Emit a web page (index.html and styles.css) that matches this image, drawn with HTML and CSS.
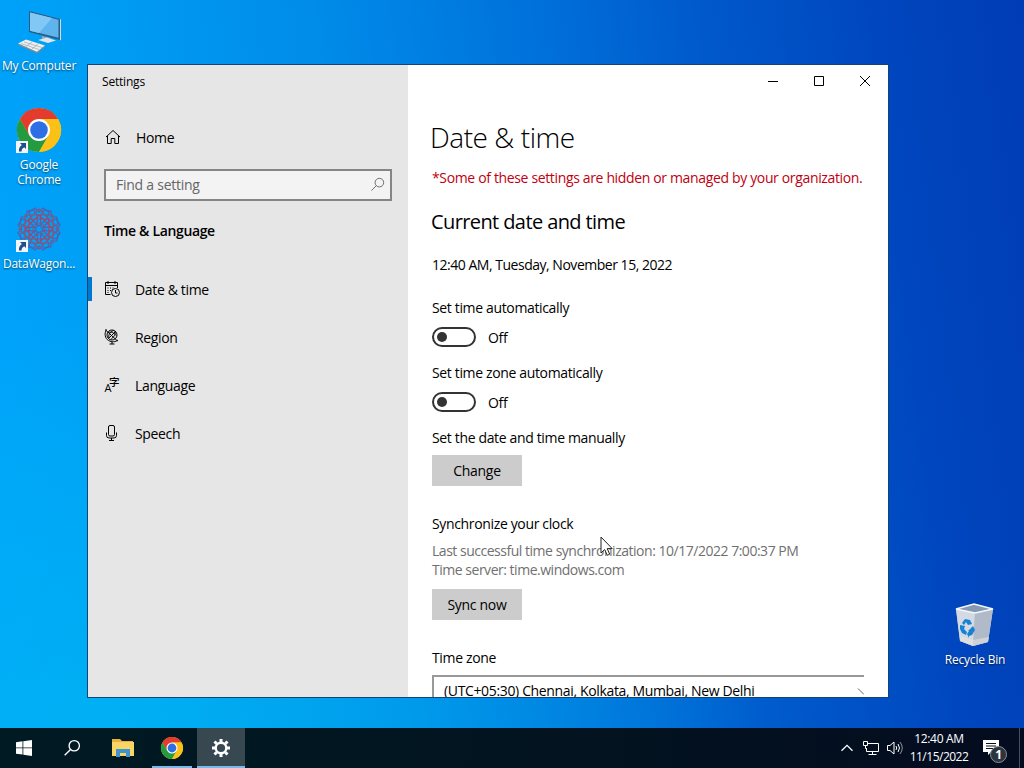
FILE: index.html
```
<!DOCTYPE html>
<html lang="en-US">
  <head>
    <title>Settings</title>
    <meta charset="utf-8" />
    <link rel="stylesheet" href="styles.css" />
  </head>
  <body>
    <svg class="defs" width="0" height="0">
      <symbol id="chrome" viewBox="0 0 48 48">
        <circle cx="24" cy="24" r="22" fill="#fbc116" />
        <path d="M24 13h19.1A22 22 0 0 0 4.900 13L14.500 29.500z" fill="#e33b2e" />
        <path d="M4.900 13A22 22 0 0 0 24 46L33.500 29.500 14.500 29.500z" fill="#249a41" />
        <path d="M24 46A22 22 0 0 0 43.100 13H24L33.500 29.500z" fill="#fbc116" />
        <circle cx="24" cy="24" r="11" fill="#fff" />
        <circle cx="24" cy="24" r="8.800" fill="#2f6fe4" />
      </symbol>
      <symbol id="shortcut" viewBox="0 0 12 12">
        <path d="M0 0h12v12H0z" fill="#f2f6fa" />
        <path d="M4 2h6v6L8.200 6.300C6.200 7.500 5.500 8.600 5.600 10.500H3C2.600 7.800 3.700 5.500 5.900 4z" fill="#1f4e8c" />
      </symbol>
      <symbol id="search" viewBox="0 0 16 16">
        <circle cx="10" cy="6" r="4.600" />
        <path d="M6.700 9.300L1.500 14.500" />
      </symbol>
    </svg>

    <div class="desktop">
      <div class="shortcut computer">
        <svg width="48" height="48" viewBox="0 0 48 48">
          <path d="M14 4l31 8v21L14 25z" fill="#2b5b80" />
          <path d="M15 5.500l28.500 7.300v18L15 23.800z" fill="#5fb4ee" />
          <path d="M15 5.500l22 5.600-13 15-9-2.300z" fill="#82c8f5" />
          <path d="M45 12l1 .5v21l-1-.5z" fill="#d5dde2" />
          <path d="M27 29l8 2v4l-8-2z" fill="#9aa7ae" />
          <path d="M23 33l9-2.500 9 3-8 2.500z" fill="#dfe5e9" />
          <path d="M3 36.500l8-4 19 6-8 6.500z" fill="#edf0f2" />
          <path d="M6 36.500l18 6M9 35l18 5.500M11 39.500l6-4.500M17 42l6-5" stroke="#9da8ae" stroke-width=".7" />
          <path d="M3 36.500l19 8.500 8-6.500v1.500l-8 6.500-19-8.600z" fill="#7e8a92" />
        </svg>
        <span>My Computer</span>
      </div>
      <div class="shortcut google-chrome">
        <svg width="48" height="48"><use href="#chrome" /></svg>
        <svg class="arrow" width="12" height="12"><use href="#shortcut" /></svg>
        <span>Google<br />Chrome</span>
      </div>
      <div class="shortcut datawagon">
        <svg width="48" height="48" viewBox="-24 -24 48 48" fill="none" stroke="#565fa8" stroke-width="1.200">
          <path id="petal" d="M-4-21L0-17 4-21 10-17 8-10 0-3-8-10-10-17z" />
          <use href="#petal" transform="rotate(45)" />
          <use href="#petal" transform="rotate(90)" />
          <use href="#petal" transform="rotate(135)" />
          <use href="#petal" transform="rotate(180)" />
          <use href="#petal" transform="rotate(225)" />
          <use href="#petal" transform="rotate(270)" />
          <use href="#petal" transform="rotate(315)" />
          <path d="M-14-14h28v28h-28zM0-20L20 0 0 20-20 0z" stroke="#80587f" />
          <path d="M-10-10h20v20h-20zM0-14L14 0 0 14-14 0z" stroke="#a04a68" />
          <circle r="6" stroke="#a04a68" stroke-dasharray="3 1.500" />
        </svg>
        <svg class="arrow" width="12" height="12"><use href="#shortcut" /></svg>
        <span>DataWagon...</span>
      </div>
      <div class="shortcut recycle">
        <svg width="48" height="48" viewBox="0 0 48 48">
          <path d="M5 8l18-5 19 5-5 33-15 4-13-5z" fill="#c3cbd5" />
          <path d="M5 8l19 4-2 33-13-5z" fill="#d3dae3" />
          <path d="M24 12l18-4-5 33-15 4z" fill="#b0bac8" />
          <path d="M5 8l18-5 19 5-18 4z" fill="#8499b2" stroke="#f4f7f9" stroke-width="1.300" />
          <path d="M9 35l13 4 16-3-1 5-15 4-13-5z" fill="#e4e2e0" opacity=".6" />
          <g fill="#1682d4">
            <path d="M11 22l3-4 5 1 2 4-4 1-2-3-2 3z" />
            <path d="M9 24l5 1-1 3 3 3-1 3-4-2-2-4z" />
            <path d="M17 30l5-5 2 4-3 5-3 1v2l-2-4 2-3z" />
          </g>
        </svg>
        <span>Recycle Bin</span>
      </div>

      <div class="window">
        <aside class="sidebar">
          <div class="title">Settings</div>
          <div class="item home">
            <svg class="icon" width="16" height="16" viewBox="0 0 16 16">
              <path d="M1 8L8 1.500 15 8M2.500 7v7.500h3.700V9.500h3.600v5h3.700V7" />
            </svg>
            Home
          </div>
          <div class="search">
            <span>Find a setting</span>
            <svg width="15" height="15" class="icon"><use href="#search" /></svg>
          </div>
          <div class="category">Time &amp; Language</div>
          <nav>
            <div class="item active">
              <svg class="icon" width="16" height="16" viewBox="0 0 16 16">
                <path d="M6.500 13.500h-5v-12h12V7M1.500 4.500h12M4 0v3M11 0v3" />
                <path d="M3.500 7h1M6 7h1M8.500 7h1M3.500 9.500h1M6 9.500h1M3.500 11.500h1" />
                <circle cx="11.500" cy="11.500" r="4" />
                <path d="M11.500 9v3h2" />
              </svg>
              Date &amp; time
            </div>
            <div class="item">
              <svg class="icon" width="16" height="16" viewBox="0 0 16 16">
                <circle cx="8" cy="6" r="5" />
                <path d="M2.500.5C0 4.500 1 9.500 4.500 11.500s7 1.500 9.500-.5M1 .5l12.500 11.500M8 12.500v2.500M5.500 15h5" />
                <path d="M4 3.500c3-1 6 0 8 3M5 9c-1-3 1-6 4.500-7.500M11 2c1 3-1 6-4.500 8.500M11.500 2.500l-7 7" />
              </svg>
              Region
            </div>
            <div class="item">
              <svg class="icon glyphs" width="16" height="16" viewBox="0 0 16 16">
                <text x="0.500" y="14.500" font-size="11">A</text>
                <text x="5" y="9" font-size="10.500">字</text>
              </svg>
              Language
            </div>
            <div class="item">
              <svg class="icon" width="16" height="16" viewBox="0 0 16 16">
                <rect x="4.500" y=".5" width="6" height="10.500" rx="1.500" />
                <path d="M2.500 7.500v3q0 2.500 2.500 2.500h5q2.500 0 2.500-2.500v-3M7.500 13v2.500M5 15.500h5" />
              </svg>
              Speech
            </div>
          </nav>
        </aside>
        <main>
          <div class="controls">
            <svg width="46" height="32"><path d="M18 16.500h10" /></svg>
            <svg width="46" height="32"><path d="M18.500 11.500h9v9h-9z" /></svg>
            <svg width="46" height="32"><path d="M18 11l10 10M28 11L18 21" /></svg>
          </div>
          <h1>Date &amp; time</h1>
          <p class="warning">*Some of these settings are hidden or managed by your organization.</p>
          <h2>Current date and time</h2>
          <p class="now">12:40 AM, Tuesday, November 15, 2022</p>
          <p class="auto-time">Set time automatically</p>
          <div class="switch"><i></i><span>Off</span></div>
          <p class="auto-zone">Set time zone automatically</p>
          <div class="switch"><i></i><span>Off</span></div>
          <p class="manual">Set the date and time manually</p>
          <button>Change</button>
          <p class="sync">Synchronize your clock</p>
          <p class="hint last-sync">Last successful time synchronization: 10/17/2022 7:00:37 PM</p>
          <p class="hint">Time server: time.windows.com</p>
          <button class="sync-now">Sync now</button>
          <p class="zone">Time zone</p>
          <div class="select">
            <span>(UTC+05:30) Chennai, Kolkata, Mumbai, New Delhi</span>
            <svg width="7" height="14"><path d="M1 4.500l6 6" stroke="#666" /></svg>
          </div>
        </main>
      </div>
      <svg class="cursor" width="14" height="21" viewBox="0 0 14 21">
        <path d="M1 1v16l3.700-3.500 2.600 5.800 2.400-1.100-2.500-5.600h5z" fill="#fff" stroke="#222" />
      </svg>
    </div>

    <footer class="taskbar">
      <div class="task">
        <svg width="18" height="18" viewBox="0 0 18 18" fill="#fff">
          <path d="M1 3.200l6.500-.9v6.200H1zM8.300 2.200L17 1v7.500H8.300zM1 9.300h6.500v6.300L1 14.700zM8.300 9.300H17V17l-8.700-1.200z" />
        </svg>
      </div>
      <div class="task">
        <svg width="18" height="18" class="find"><use href="#search" /></svg>
      </div>
      <div class="task explorer">
        <svg width="24" height="20" viewBox="0 0 24 20">
          <path d="M1 1h8l2 2h11v15H1z" fill="#e9b13c" />
          <path d="M1 4h22v14H1z" fill="#fbd466" />
          <path d="M5 19v-8h14v8h-4v-4H9v4z" fill="#3f94cf" />
        </svg>
      </div>
      <div class="task running">
        <svg width="24" height="24"><use href="#chrome" /></svg>
      </div>
      <div class="task running focused">
        <svg width="20" height="20" viewBox="-10 -10 20 20" stroke="#fff" fill="none">
          <circle r="5.300" stroke-width="2.400" />
          <path d="M0-6v-3M0 6v3M-6 0h-3M6 0h3M-4.300-4.300l-2.200-2.200M4.300-4.300l2.200-2.200M-4.300 4.300l-2.200 2.200M4.300 4.300l2.200 2.200" stroke-width="3" />
        </svg>
      </div>
      <div class="tray">
        <svg width="14" height="14" viewBox="0 0 14 14"><path d="M1.500 9.800L7 4.300l5.500 5.500" stroke-width="1.300" /></svg>
        <svg width="18" height="16" viewBox="0 0 18 16">
          <path d="M6 3.500h10.500v8H4.500V8M10.500 11.500v3M6.500 14.500h8M1.500 1.500h4v4h-4zM3.500 5.500v3h1" />
        </svg>
        <svg width="18" height="16" viewBox="0 0 18 16">
          <path d="M1.500 5.500h2.500l4-3.500v12l-4-3.500H1.500zM10 6q1.500 2 0 4M12 4q3 4 0 8" />
          <path d="M14 2q4.500 6 0 12" stroke="#8a929c" />
        </svg>
        <div class="clock"><span>12:40 AM</span><br />11/15/2022</div>
        <div class="notifications">
          <svg width="18" height="18" viewBox="0 0 18 18">
            <path d="M1 1h16v12H9l-3 3v-3H1z" fill="#fff" stroke="none" />
            <path d="M4 4.500h10M4 7h10M4 9.500h7" stroke="#06101f" />
          </svg>
          <b>1</b>
        </div>
      </div>
    </footer>
  </body>
</html>
```
FILE: styles.css
```
* {
  box-sizing: border-box;
}
body {
  display: flex;
  flex-direction: column;
  width: 1024px;
  height: 768px;
  margin: 0;
  overflow: hidden;
  font: 14px/20px "Open Sans", "Noto Sans", sans-serif;
  letter-spacing: -0.35px;
  color: #000;
}
h1,
h2,
p {
  margin: 0;
  white-space: nowrap;
}
.defs {
  position: absolute;
}

/* desktop */
.desktop {
  position: relative;
  flex: 1;
  background:
    radial-gradient(
      640px 420px at 12% 100%,
      rgb(0 186 240 / 60%),
      rgb(0 186 240 / 0%)
    ),
    linear-gradient(
      83deg,
      #00a4fc 0%,
      #009ff6 14%,
      #008ce9 36%,
      #0074dc 54%,
      #0059ca 71%,
      #0046be 87%,
      #003cb5 100%
    );
}
.shortcut {
  position: absolute;
  display: flex;
  flex-direction: column;
  align-items: center;
  width: 78px;
  color: #fff;
  font-size: 12px;
  letter-spacing: -0.2px;
  line-height: 15px;
  text-align: center;
  white-space: nowrap;
  text-shadow: 0 1px 2px rgb(0 0 0 / 60%);
}
.shortcut span {
  margin-top: 3px;
}
.computer {
  left: 0;
  top: 7px;
}
.google-chrome {
  left: 0;
  top: 106px;
}
.datawagon {
  left: 0;
  top: 205px;
}
.recycle {
  left: 936px;
  top: 601px;
}
.arrow {
  position: absolute;
  left: 16px;
  top: 35px;
}

/* settings window */
.window {
  position: absolute;
  left: 87px;
  top: 64px;
  display: flex;
  width: 802px;
  height: 634px;
  border: 1px solid #124478;
  background: #fff;
}
.sidebar {
  width: 320px;
  background: #e6e6e6;
}
.title {
  height: 32px;
  padding-left: 14px;
  font-size: 12px;
  letter-spacing: -0.2px;
  line-height: 34px;
}
.item {
  display: flex;
  align-items: center;
  gap: 15px;
  height: 48px;
  padding-left: 16px;
}
.item .icon {
  margin-top: -2px;
}
.home {
  margin-top: 17px;
  padding-left: 17px;
}
.icon {
  fill: none;
  stroke: #000;
}
.glyphs {
  fill: #000;
  stroke: none;
  overflow: visible;
  font-family: "Open Sans", "Noto Sans CJK JP", sans-serif;
  font-weight: 500;
}
.search {
  display: flex;
  align-items: center;
  justify-content: space-between;
  width: 288px;
  height: 32px;
  margin: 7px 16px 0;
  padding: 0 5px 1px 10px;
  border: 2px solid #858585;
  background: #f3f3f3;
  color: #666;
  letter-spacing: -0.25px;
}
.search .icon {
  stroke: #666;
}
.category {
  margin: 20px 16px 25px;
  font-weight: 600;
}
.active {
  position: relative;
}
.active::before {
  content: "";
  position: absolute;
  left: 0;
  top: 11px;
  width: 4px;
  height: 24px;
  background: #0078d0;
}
main {
  display: flex;
  flex-direction: column;
  align-items: flex-start;
  width: 480px;
  padding-left: 24px;
  overflow: hidden;
}
main > * {
  flex: none;
}
.controls {
  align-self: flex-end;
  display: flex;
  height: 32px;
  fill: none;
  stroke: #000;
}
h1 {
  margin: 20px 0 0 -2px;
  font-size: 28px;
  font-weight: 300;
  letter-spacing: -0.45px;
  line-height: 40px;
}
.warning {
  margin-top: 11px;
  color: #c00010;
}
h2 {
  margin: 20px 0 0 -1px;
  font-size: 20px;
  font-weight: 400;
  letter-spacing: -0.6px;
  line-height: 28px;
}
.now {
  margin-top: 19px;
  letter-spacing: -0.48px;
}
.auto-time {
  margin-top: 23px;
}
.switch {
  display: flex;
  gap: 12px;
  height: 20px;
  margin-top: 9px;
}
.switch i {
  width: 44px;
  height: 20px;
  padding: 3px;
  border: 2px solid #333;
  border-radius: 10px;
}
.switch i::before {
  content: "";
  display: block;
  width: 10px;
  height: 10px;
  border-radius: 50%;
  background: #333;
}
.switch span {
  line-height: 22px;
}
.auto-zone,
.manual {
  margin-top: 16px;
}
button {
  width: 90px;
  height: 31px;
  margin: 7px 0 0;
  padding: 0;
  border: 0;
  background: #ccc;
  color: #000;
  font: inherit;
  letter-spacing: -0.3px;
}
.sync {
  margin-top: 28px;
}
.hint {
  color: #707070;
  line-height: 19px;
  letter-spacing: -0.48px;
}
.last-sync {
  margin-top: 7px;
}
.sync-now {
  margin-top: 10px;
}
.zone {
  margin-top: 28px;
}
.select {
  display: flex;
  align-items: center;
  justify-content: space-between;
  width: 432px;
  height: 32px;
  margin-top: 7px;
  padding-left: 10px;
  border: 2px solid #999;
  border-right: 0;
  white-space: nowrap;
}
.cursor {
  position: absolute;
  left: 600px;
  top: 536px;
}

/* taskbar */
.taskbar {
  display: flex;
  height: 40px;
  background: linear-gradient(90deg, #001a24, #02141f 50%, #040c20);
}
.task {
  display: flex;
  align-items: center;
  justify-content: center;
  width: 48px;
}
.find {
  fill: none;
  stroke: #fff;
  stroke-width: 1.2;
}
.explorer {
  margin: 0 2px 0 3px;
}
.running {
  width: 40px;
  margin-left: 3px;
  padding-top: 2px;
  border-bottom: 2px solid #76b9ed;
}
.focused {
  width: 48px;
  margin-left: 5px;
  background: #374851;
}
.tray {
  display: flex;
  align-items: center;
  gap: 6px;
  margin-left: auto;
  color: #fff;
  fill: none;
  stroke: #fff;
}
.tray svg:first-child {
  margin-right: 2px;
}
.clock {
  width: 60px;
  margin-left: -1px;
  font-size: 12px;
  letter-spacing: -0.5px;
  line-height: 18px;
  text-align: center;
}
.clock span {
  letter-spacing: -0.3px;
}
.notifications {
  position: relative;
  width: 45px;
  height: 100%;
  margin-right: 4px;
  padding: 11px 0 0 7px;
  border-right: 1px solid #44505c;
}
.notifications b {
  position: absolute;
  left: 15px;
  top: 18px;
  width: 17px;
  height: 17px;
  border: 1px solid #8a9098;
  border-radius: 50%;
  background: #2c3440;
  font-size: 12px;
  line-height: 15px;
  text-align: center;
}
```
